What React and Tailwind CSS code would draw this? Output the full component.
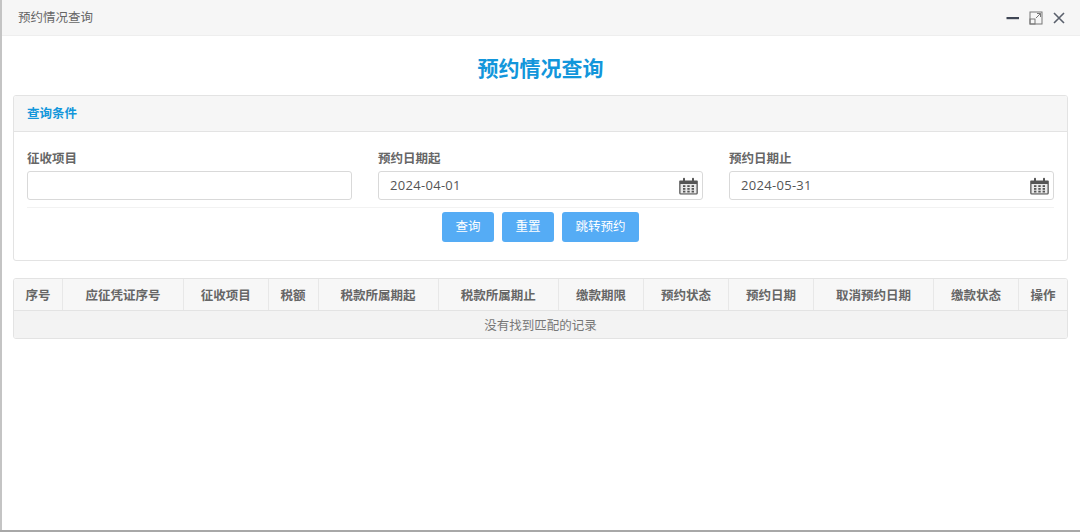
import React from 'react';

const font = '[font-family:"Open_Sans","Noto_Sans_CJK_SC",sans-serif]';

const columns = [
  { title: '序号', width: 'w-[49px]' },
  { title: '应征凭证序号', width: 'w-[121px]' },
  { title: '征收项目', width: 'w-[84.5px]' },
  { title: '税额', width: 'w-[50px]' },
  { title: '税款所属期起', width: 'w-[120px]' },
  { title: '税款所属期止', width: 'w-[120.5px]' },
  { title: '缴款期限', width: 'w-[85px]' },
  { title: '预约状态', width: 'w-[85px]' },
  { title: '预约日期', width: 'w-[85px]' },
  { title: '取消预约日期', width: 'w-[120px]' },
  { title: '缴款状态', width: 'w-[85px]' },
  { title: '操作', width: 'flex-1' },
];

function CalendarIcon() {
  return (
    <svg width="19" height="18" viewBox="0 0 19 18" className="shrink-0">
      <path d="M1 3.5h17a.8.8 0 0 1 .8.8V16a1.6 1.6 0 0 1-1.6 1.6H1.8A1.6 1.6 0 0 1 .2 16V4.3a.8.8 0 0 1 .8-.8z" fill="#555" />
      <rect x="1.5" y="7" width="16" height="9.4" fill="#e9e9e9" />
      <rect x="4" y="0.8" width="2" height="4" rx="1" fill="#555" />
      <rect x="13" y="0.8" width="2" height="4" rx="1" fill="#555" />
      <g fill="#555">
        <rect x="4" y="8.2" width="2.4" height="1.8" />
        <rect x="8.3" y="8.2" width="2.4" height="1.8" />
        <rect x="12.6" y="8.2" width="2.4" height="1.8" />
        <rect x="4" y="11" width="2.4" height="1.8" />
        <rect x="8.3" y="11" width="2.4" height="1.8" />
        <rect x="12.6" y="11" width="2.4" height="1.8" />
        <rect x="4" y="13.7" width="2.4" height="1.8" />
        <rect x="8.3" y="13.7" width="2.4" height="1.8" />
        <rect x="12.6" y="13.7" width="2.4" height="1.8" />
      </g>
    </svg>
  );
}

function Field({ label, value, hasIcon }) {
  return (
    <div className="w-[325px]">
      <div className="mb-[2px] h-[21px] text-[12.5px] leading-[21px] font-bold text-[#666]">{label}</div>
      <div className="flex h-[29px] items-center justify-between rounded-[3px] border border-[#d9d9d9] bg-white pr-[4px] pl-[11px]">
        <span className="text-[13px] tracking-[0.3px] text-[#555]">{value}</span>
        {hasIcon && <CalendarIcon />}
      </div>
    </div>
  );
}

function Button({ children, width }) {
  return (
    <button className={`h-[30px] ${width} rounded-[3px] bg-[#55acf5] pt-px text-[12.5px] text-white`}>{children}</button>
  );
}

export default function App() {
  return (
    <div className={`flex h-[532px] w-[1080px] flex-col overflow-hidden bg-white ${font}`}>
      <div className="flex flex-1 flex-col border-l-2 border-[#c4c4c4]">
        <div className="flex h-[36px] items-center justify-between border-b border-[#eeeeee] bg-[#f6f6f6] pr-[14px] pl-[16px]">
          <span className="pt-px text-[12.5px] text-[#666]">预约情况查询</span>
          <div className="flex items-center gap-[9px]">
            <svg width="14" height="14" viewBox="0 0 14 14">
              <rect x="0.5" y="6" width="12.5" height="2.2" fill="#3f4654" />
            </svg>
            <svg width="14" height="14" viewBox="0 0 14 14" fill="none" stroke="#777" strokeWidth="1">
              <rect x="1" y="1" width="12" height="12" />
              <rect x="1" y="8" width="5" height="5" />
              <path d="M7 7l4.5-4.5M8 2.5h3.5V6" />
            </svg>
            <svg width="14" height="14" viewBox="0 0 14 14" fill="none" stroke="#5a606c" strokeWidth="1.6">
              <path d="M2 2l10 10M12 2L2 12" />
            </svg>
          </div>
        </div>

        <div className="flex flex-col pt-[16px] pr-[12px] pl-[11px]">
          <h1 className="mb-[11px] h-[32px] text-center text-[21px] leading-[32px] font-bold text-[#1296db]">预约情况查询</h1>

          <div className="overflow-hidden rounded-[3px] border border-[#e3e3e3]">
            <div className="flex h-[36px] items-center border-b border-[#e3e3e3] bg-[#f6f6f6] pt-px pl-[13px] text-[12.5px] font-bold text-[#1296db]">
              查询条件
            </div>
            <div className="h-[128px] px-[13px] pt-[16px]">
              <div className="flex gap-[26px]">
                <Field label="征收项目" value="" />
                <Field label="预约日期起" value="2024-04-01" hasIcon />
                <Field label="预约日期止" value="2024-05-31" hasIcon />
              </div>
              <div className="mt-[7px] flex justify-center gap-[8px] border-t border-[#f2f2f2] pt-[4px]">
                <Button width="w-[52px]">查询</Button>
                <Button width="w-[52px]">重置</Button>
                <Button width="w-[77px]">跳转预约</Button>
              </div>
            </div>
          </div>

          <div className="mt-[17px] overflow-hidden rounded-[3px] border border-[#e3e3e3] text-[12.5px]">
            <div className="flex h-[32px] border-b border-[#e3e3e3] bg-[#f7f7f7]">
              {columns.map((col, i) => (
                <div
                  key={col.title}
                  className={`flex items-center justify-center pt-[3px] ${col.width} ${i < columns.length - 1 ? 'border-r border-[#e8e8e8]' : ''} font-bold text-[#666]`}
                >
                  {col.title}
                </div>
              ))}
            </div>
            <div className="flex h-[27px] items-center justify-center bg-[#f3f3f3] pt-[3px] text-[#777]">没有找到匹配的记录</div>
          </div>
        </div>
      </div>
      <div className="h-[2px] bg-[#a8a8a8]"></div>
    </div>
  );
}
